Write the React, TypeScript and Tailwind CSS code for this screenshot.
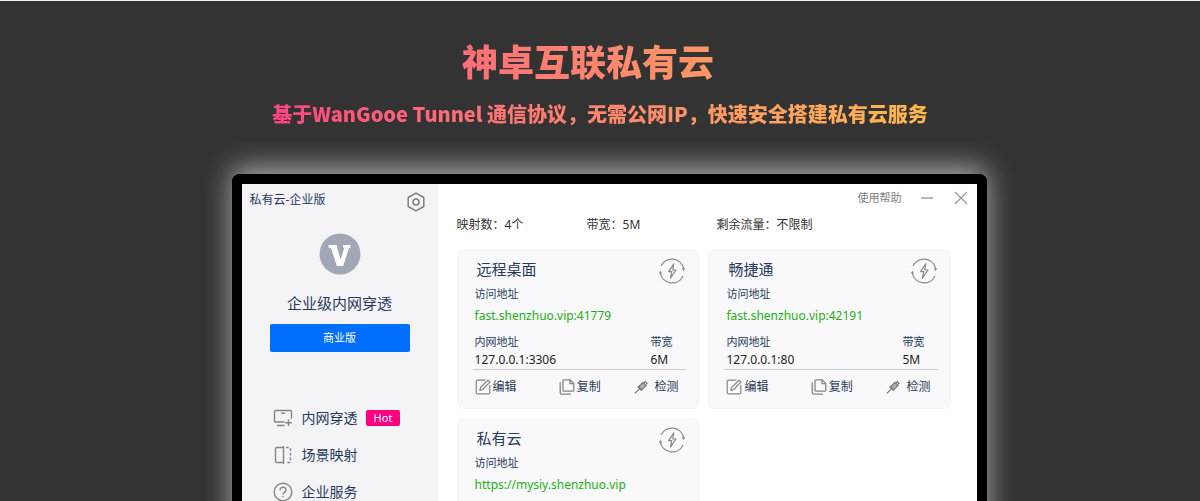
import type { ReactNode } from 'react';

interface Mapping {
  id: string;
  name: string;
  url: string;
  local?: string;
  bandwidth?: string;
}

const MAPPINGS: Mapping[] = [
  { id: 'desktop', name: '远程桌面', url: 'fast.shenzhuo.vip:41779', local: '127.0.0.1:3306', bandwidth: '6M' },
  { id: 'cjt', name: '畅捷通', url: 'fast.shenzhuo.vip:42191', local: '127.0.0.1:80', bandwidth: '5M' },
  { id: 'cloud', name: '私有云', url: 'https://mysiy.shenzhuo.vip' },
];

function GearIcon() {
  return (
    <svg width="20" height="20" viewBox="0 0 20 20" fill="none" stroke="#808080" strokeWidth="1.5">
      <path d="M10 1.2 17.8 5.5v9L10 18.8 2.2 14.5v-9Z" strokeLinejoin="round" />
      <circle cx="10" cy="10" r="3" />
    </svg>
  );
}

function MonitorIcon() {
  return (
    <svg width="20" height="20" viewBox="0 0 20 20" fill="none" stroke="#858585" strokeWidth="1.4">
      <path d="M11.5 14H2.8Q1.5 14 1.5 12.7V3.8Q1.5 2.5 2.8 2.5h14.4q1.3 0 1.3 1.3v7" />
      <path d="M8.2 5.2h3.6M4 17.5h7.5M15.5 11.5v6.5M12.2 14.8h6.6" />
    </svg>
  );
}

function SceneIcon() {
  return (
    <svg width="20" height="20" viewBox="0 0 20 20" fill="none" stroke="#858585" strokeWidth="1.4">
      <path d="M10.5 1v18M9.8 17.5H3.8q-1.3 0-1.3-1.3V3.8q0-1.3 1.3-1.3h6" />
      <path d="M13 2.5h3.2q1.3 0 1.3 1.3v12.4q0 1.3-1.3 1.3H13" strokeDasharray="2.6 2" />
    </svg>
  );
}

function HelpIcon() {
  return (
    <svg width="20" height="20" viewBox="0 0 20 20" fill="none" stroke="#858585" strokeWidth="1.4">
      <circle cx="10" cy="10" r="8.8" />
      <path d="M7 8.2c0-1.9 1.3-3 3-3s3 1.1 3 2.7c0 2.2-3 2.3-3 4.7M10 13.8v1.5" />
    </svg>
  );
}

function SyncIcon() {
  return (
    <svg width="28" height="28" viewBox="0 0 28 28" fill="none" stroke="#8a8a8a" strokeWidth="1.2">
      <path d="M3 9A12 12 0 0 1 25.6 11.5M25 19A12 12 0 0 1 2.4 16.5" />
      <path d="M23.8 11.2h3.4l-1.4 3ZM4.2 16.8H.8l1.4-3Z" fill="#8a8a8a" stroke="none" />
      <path d="M15.8 6.8 10.6 14.6h3.2l-1.4 6.6 5.6-8.2h-3.2Z" strokeLinejoin="round" />
    </svg>
  );
}

function EditIcon() {
  return (
    <svg width="16" height="16" viewBox="0 0 16 16" fill="none" stroke="#858585" strokeWidth="1.2">
      <path d="M10.5 1.2H2.4Q1.2 1.2 1.2 2.4v11.2q0 1.2 1.2 1.2h11.2q1.2 0 1.2-1.2V6" />
      <path d="m4.8 11.4.8-3L13 1.2l1.9 1.9-7.2 7.4Z" strokeLinejoin="round" />
    </svg>
  );
}

function CopyIcon() {
  return (
    <svg width="16" height="16" viewBox="0 0 16 16" fill="none" stroke="#858585" strokeWidth="1.3">
      <path d="M4 2Q4 .8 5.2.8h6l3.6 3.6V11q0 1.2-1.2 1.2H5.2Q4 12.2 4 11Z" />
      <path d="M11 .8v3.8h3.8M1.2 3.2v10.4q0 1.6 1.6 1.6H12" />
    </svg>
  );
}

function ProbeIcon() {
  return (
    <svg width="14" height="14" viewBox="0 0 14 14" fill="none" stroke="#757575" strokeWidth="1.2">
      <path d="m4.4 7 4.6-4.6 3 3L7.4 10Z" fill="#b0b0b0" />
      <path d="m3.6 6.4 4.2 4.2M10.2 2.8l1.2-1.2 1.6 1.6-1.2 1.2M5.4 8.8.8 13.4" />
    </svg>
  );
}

const MENU = [
  { label: '内网穿透', icon: <MonitorIcon />, hot: true },
  { label: '场景映射', icon: <SceneIcon />, hot: false },
  { label: '企业服务', icon: <HelpIcon />, hot: false },
];

function CardAction({ icon, children }: { icon: ReactNode; children: ReactNode }) {
  return (
    <button type="button" className="flex items-center gap-0.5 text-xs text-[#2b3a55]">
      {icon}
      {children}
    </button>
  );
}

function MappingCard({ item }: { item: Mapping }) {
  return (
    <article className="h-40 rounded-md border border-[#f5f5f8] bg-[#f9f9fb] pt-[7px] pr-3 pl-[15px]">
      <div className="flex items-start justify-between">
        <h3 className="pl-1 text-[15px] leading-6 text-[#26395c]">{item.name}</h3>
        <SyncIcon />
      </div>
      <div className="-mt-[3px] pl-0.5">
        <p className="text-[11px] leading-6 text-[#26395c]">访问地址</p>
        <a href="#" className="block text-xs leading-5 text-[#22b014]">{item.url}</a>
      </div>
      {item.local && (
        <>
          <div className="mt-1.5 flex justify-between border-b border-[#cfcfcf] pr-3.5 pb-px pl-0.5 text-[11px] text-[#26395c]">
            <div>
              <p className="leading-5">内网地址</p>
              <p className="text-xs leading-4 text-[#222]">{item.local}</p>
            </div>
            <div>
              <p className="leading-5">带宽</p>
              <p className="text-xs leading-4 text-[#222]">{item.bandwidth}</p>
            </div>
          </div>
          <div className="mt-[9px] grid grid-cols-[10fr_9fr_auto] pr-2 pl-0.5">
            <CardAction icon={<EditIcon />}>编辑</CardAction>
            <CardAction icon={<CopyIcon />}>复制</CardAction>
            <CardAction icon={<span className="mr-1"><ProbeIcon /></span>}>检测</CardAction>
          </div>
        </>
      )}
    </article>
  );
}

export default function App() {
  return (
    <div className="h-screen overflow-hidden border-t border-[#eef3f3] bg-[#333] font-['Noto_Sans','Noto_Sans_CJK_SC',sans-serif]">
      <header className="mx-auto w-fit bg-linear-to-r from-[#ff4480] to-[#ffb84d] bg-clip-text pt-[33px] text-center font-['Noto_Sans_CJK_SC',sans-serif] font-black text-transparent">
        <h1 className="pr-6 text-4xl leading-[52px]">神卓互联私有云</h1>
        <p className="mt-3.5 text-xl leading-7">基于WanGooe Tunnel 通信协议，无需公网IP，快速安全搭建私有云服务</p>
      </header>

      <div className="mt-[46px] pl-[19px]">
        <main className="mx-auto flex w-[64%] overflow-hidden rounded-t-lg border-10 border-b-0 border-black bg-white shadow-[0_-6px_28px_#ffffff99]">
          <aside className="flex w-49 shrink-0 flex-col bg-[#f4f4f7] text-[#26395c]">
            <div className="flex items-start justify-between pt-2 pr-3 pl-2">
              <span className="text-xs leading-4">私有云-企业版</span>
              <button type="button" aria-label="设置"><GearIcon /></button>
            </div>
            <div className="mt-[21px] flex flex-col items-center px-7">
              <svg width="42" height="42" viewBox="0 0 42 42">
                <circle cx="21" cy="21" r="20.5" fill="#a1a7b5" />
                <path d="M9.5 12H18v2.6l3.6 11.6L25.4 14.6H24V12h7.500v2.800h-1.500L24.200 33h-6.400L12 14.800H9.500Z" fill="#fff" />
              </svg>
              <h2 className="mt-4 text-[15px] leading-6">企业级内网穿透</h2>
              <button type="button" className="mt-[9px] h-7 w-full rounded-xs bg-[#006eff] text-[11px] text-white">商业版</button>
            </div>
            <nav className="mt-[54px] flex flex-col gap-[13px] pl-[31px]">
              {MENU.map((m) => (
                <a key={m.label} href="#" className="flex items-center text-sm leading-6">
                  {m.icon}
                  <span className="ml-[9px]">{m.label}</span>
                  {m.hot && <span className="ml-2 rounded-xs bg-[#ff0080] px-2 text-[11px] leading-4 text-white">Hot</span>}
                </a>
              ))}
            </nav>
          </aside>

          <section className="min-w-0 flex-1 pr-[26px] pl-[19px]">
            <div className="-mr-[18px] flex items-center justify-end gap-4.5 pt-1 text-[11px] leading-5 text-[#808080]">
              <a href="#">使用帮助</a>
              <button type="button" aria-label="最小化">
                <svg width="16" height="16" viewBox="0 0 16 16" stroke="#999" strokeWidth="1.4"><path d="M2 8h12" /></svg>
              </button>
              <button type="button" aria-label="关闭">
                <svg width="16" height="16" viewBox="0 0 16 16" stroke="#999" strokeWidth="1.3"><path d="m2 2 12 12M14 2 2 14" /></svg>
              </button>
            </div>
            <div className="mt-[5px] flex text-xs leading-6 text-[#333]">
              <span className="w-[130px]">映射数：4个</span>
              <span className="w-[130px]">带宽：5M</span>
              <span>剩余流量：不限制</span>
            </div>
            <div className="mt-3 grid grid-cols-2 gap-[9px]">
              {MAPPINGS.map((m) => <MappingCard key={m.id} item={m} />)}
            </div>
          </section>
        </main>
      </div>
    </div>
  );
}
